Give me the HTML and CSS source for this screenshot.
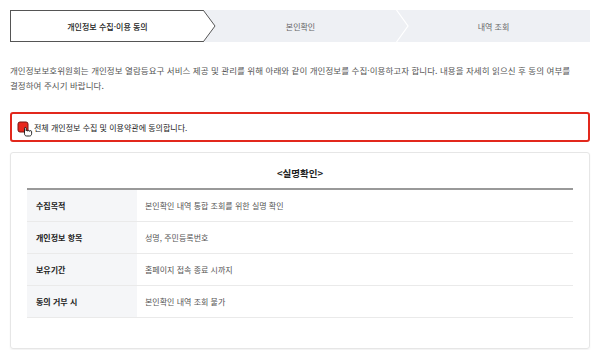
FILE: index.html
```html
<!DOCTYPE html>
<html lang="ko">
<head>
    <meta charset="UTF-8">
    <meta name="viewport" content="width=device-width, initial-scale=1.0">
    <title>개인정보 수집·이용 동의</title>
    <link rel="stylesheet" href="styles.css">
</head>
<body>
    <div class="steps">
        <div class="step active">
            개인정보 수집·이용 동의
            <svg class="arrow" width="13" height="32" viewBox="0 0 13 32">
                <polygon points="0,0.5 0.5,0.5 12,16 0.5,31.5 0,31.5" fill="#fff"/>
                <polyline points="0,0.5 0.5,0.5 12,16 0.5,31.5 0,31.5" fill="none" stroke="#555" stroke-width="1"/>
            </svg>
        </div>
        <div class="step">
            본인확인
            <svg class="arrow" width="13" height="32" viewBox="0 0 13 32">
                <polyline points="0.5,0 12,16 0.5,32" fill="none" stroke="#fff" stroke-width="1.2"/>
            </svg>
        </div>
        <div class="step">내역 조회</div>
    </div>

    <p class="intro">
        개인정보보호위원회는 개인정보 열람등요구 서비스 제공 및 관리를 위해 아래와 같이 개인정보를 수집·이용하고자 합니다. 내용을 자세히 읽으신 후 동의 여부를 결정하여 주시기 바랍니다.
    </p>

    <label class="agree">
        <span class="check">
            <svg width="16" height="16" viewBox="0 0 16 16">
                <rect x="1" y="1" width="10" height="10" rx="2" fill="#e8261c" stroke="#7a1410" stroke-width="1"/>
                <path d="M7.5 7.2 V12.8 C7.5 14 8.3 15 9.6 15 H12.6 C13.8 15 14.6 14 14.6 12.8 V10.6 C14.6 10 14.1 9.6 13.6 9.6 C13.1 9.6 12.7 10 12.7 10.4 C12.7 9.8 12.2 9.4 11.7 9.4 C11.2 9.4 10.8 9.8 10.8 10.2 C10.8 9.7 10.4 9.3 9.9 9.3 C9.5 9.3 9.2 9.5 9.1 9.8 V7.2 C9.1 6.7 8.8 6.4 8.3 6.4 C7.8 6.4 7.5 6.7 7.5 7.2 Z" fill="#fff" stroke="#111" stroke-width="0.9" stroke-linejoin="round"/>
            </svg>
        </span>
        전체 개인정보 수집 및 이용약관에 동의합니다.
    </label>

    <div class="card">
        <h2 class="card-title">&lt;실명확인&gt;</h2>
        <table class="info">
            <tr>
                <th>수집목적</th>
                <td>본인확인 내역 통합 조회를 위한 실명 확인</td>
            </tr>
            <tr>
                <th>개인정보 항목</th>
                <td>성명, 주민등록번호</td>
            </tr>
            <tr>
                <th>보유기간</th>
                <td>홈페이지 접속 종료 시까지</td>
            </tr>
            <tr>
                <th>동의 거부 시</th>
                <td>본인확인 내역 조회 불가</td>
            </tr>
        </table>
    </div>
</body>
</html>
```

FILE: styles.css
```css
body {
    margin: 0;
    padding: 10px;
    background-color: #fff;
    color: #555;
    font-family: "Noto Sans CJK KR", "Noto Sans", sans-serif;
    font-size: 8px;
}

.steps {
    display: flex;
    height: 32px;
    background-color: #eef0f4;
}

.step {
    flex: 1;
    position: relative;
    display: flex;
    align-items: center;
    justify-content: center;
    color: #666;
}

.step.active {
    background-color: #fff;
    border: 1px solid #555;
    border-right: none;
    color: #222;
    font-weight: 500;
}

.arrow {
    position: absolute;
    top: 0;
    right: -12px;
    z-index: 1;
}

.step.active .arrow {
    top: -1px;
}

.intro {
    margin: 21px 0 0;
    font-size: 8.5px;
    line-height: 15px;
    letter-spacing: 0.05px;
    word-break: keep-all;
}

.agree {
    display: flex;
    align-items: center;
    gap: 1px;
    margin-top: 19px;
    height: 26px;
    padding: 0 5px;
    border: 2px solid #e2281c;
    border-radius: 3px;
    color: #222;
}

.check {
    display: flex;
    margin-top: 3px;
}

.card {
    margin-top: 10px;
    padding: 13px 16px 30px;
    border: 1px solid #e6e6e6;
    border-radius: 3px;
    box-shadow: 0 1px 2px rgba(0, 0, 0, 0.06);
}

.card-title {
    margin: 0 0 8px;
    text-align: center;
    font-size: 9.5px;
    font-weight: 700;
    color: #222;
}

.info {
    width: 100%;
    border-collapse: collapse;
    border-top: 2px solid #999;
}

.info th,
.info td {
    padding: 0 8px;
    line-height: 31px;
    border-bottom: 1px solid #eaeaea;
    text-align: left;
}

.info th {
    width: 93px;
    padding-left: 9px;
    background-color: #f5f6f8;
    color: #222;
    font-weight: 700;
}

.info td {
    color: #555;
}
```
